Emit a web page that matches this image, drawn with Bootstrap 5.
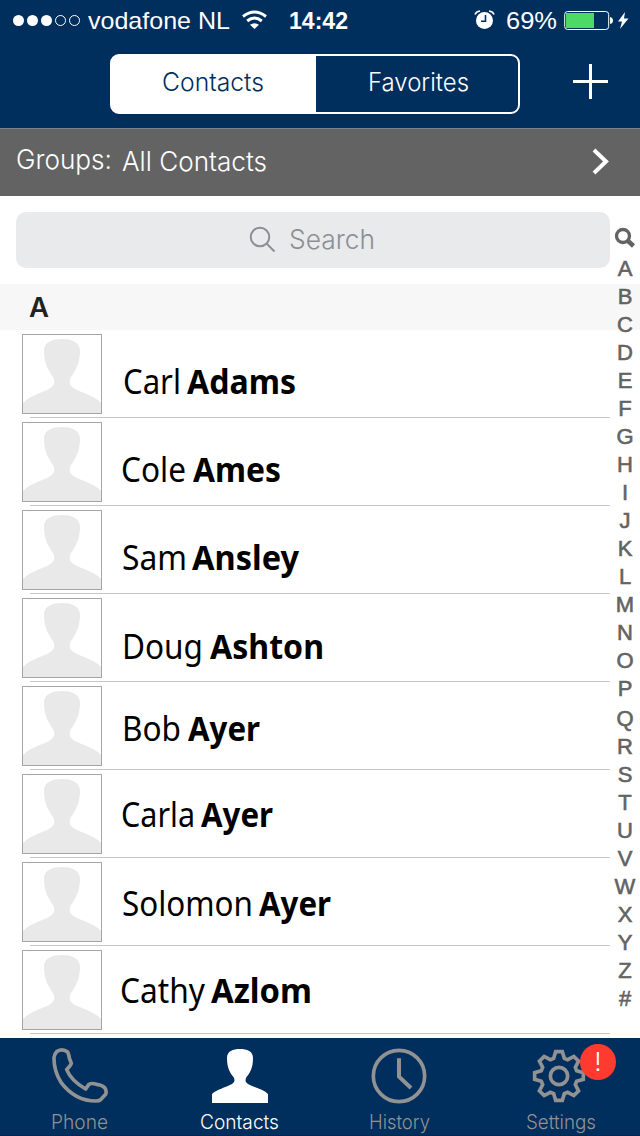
<!DOCTYPE html>
<html lang="en">
<head>
<meta charset="utf-8">
<meta name="viewport" content="width=device-width, initial-scale=1">
<title>Contacts</title>
<link href="https://cdn.jsdelivr.net/npm/bootstrap@5.3.0/dist/css/bootstrap.min.css" rel="stylesheet">
<style>
  :root { --navy:#002e5d; --muted:#929292; }
  body { width:640px; height:1136px; overflow:hidden; background:#fff; font-family:Inter,"Liberation Sans",sans-serif; font-weight:300; }
  svg { display:block; flex:none; }
  .bg-navy { background:var(--navy); }
  .fit { display:block; flex:none; white-space:nowrap; line-height:40px; height:40px; }
  .fit > span { display:inline-block; transform-origin:0 50%; }
  .status { height:40px; color:#fff; font-family:"Liberation Sans",sans-serif; font-size:24px; font-weight:400; }
  .status .fit { line-height:42px; }
  .topnav { height:88px; color:#fff; padding:14px 32px 0 110px; }
  .seg { width:410px; height:60px; border:2px solid #fff; border-radius:9px; font-size:25px; background:linear-gradient(90deg,#fff 206px,transparent 206px) border-box; }
  .seg .on { width:204px; color:var(--navy); padding:6px 0 0 50px; }
  .seg .off { padding:6px 0 0 53px; }
  .groups { height:68px; background:#636363; border-top:1px solid #7b8187; color:#fff; font-size:27px; padding-left:16px; }
  .find { margin:16px 30px 16px 16px; height:56px; border-radius:10px; background:#e9eaec; color:#8e8e93; font-size:27px; padding-left:233px; }
  .letter { height:46px; background:#f7f7f7; color:#222; font-size:27px; font-weight:600; padding:4px 0 0 29px; }
  .person { height:88px; padding-left:22px; color:#000; position:relative; font-family:"Noto Sans","Open Sans",sans-serif; font-size:34px; font-weight:400; }
  .person::after { content:""; position:absolute; left:30px; right:30px; bottom:0; height:1px; background:#c5c5c8; }
  .person b { font-weight:700; }
  .person .fit { line-height:42px; }
  .avatar { width:80px; height:80px; margin-top:4px; border:1px solid #a5a5a5; }
  .alpha { position:absolute; z-index:2; right:0; top:226px; width:30px; color:#636363; font-family:"Liberation Sans",sans-serif; font-size:22px; font-weight:400; -webkit-text-stroke:.6px #636363; text-align:center; }
  .alpha span { display:block; height:28px; line-height:29px; }
  .tabs { height:98px; margin-top:4px; color:var(--muted); font-size:20px; border-bottom:1px solid #00264f; }
  .tabs > div { width:160px; position:relative; }
  .tabs .fit { position:relative; }
  .alert-dot { position:absolute; left:100px; top:6px; width:36px; height:36px; border-radius:50%; background:#ff3b30; color:#fff; font-size:26px; line-height:36px; text-align:center; }
</style>
</head>
<body>
<svg width="0" height="0" class="position-absolute"><defs>
  <symbol id="face" viewBox="1 1 78 78"><path fill="#e9e9e9" d="M40 5C50 5 58 8 58 17C58 30 53 37 49 43C45.500 49 49 53 55 56C64 60 72 62 79 69V79H1V69C8 62 16 60 25 56C31 53 34.500 49 31 43C27 37 22 30 22 17C22 8 30 5 40 5Z"/></symbol>
</defs></svg>

<header class="bg-navy">
  <div class="status d-flex align-items-start">
    <svg width="72" height="40" style="margin-left:10px" fill="#fff"><circle cx="8.500" cy="20.500" r="5.500"/><circle cx="22.500" cy="20.500" r="5.500"/><circle cx="36.500" cy="20.500" r="5.500"/><g fill="none" stroke="#fff"><circle cx="50.500" cy="20.500" r="5"/><circle cx="64.500" cy="20.500" r="5"/></g></svg>
    <div class="fit" data-w="142" style="margin-left:6px"><span>vodafone NL</span></div>
    <svg width="26" height="40" style="margin-left:12px" fill="none" stroke="#fff" stroke-width="3"><path d="M1 16.500Q12.500 7.500 24 16.500M5.200 21Q12.500 15 19.800 21"/><path fill="#fff" stroke="none" d="M8 24.800Q12.500 21.500 17 24.800L12.500 29Z"/></svg>
    <div class="fit fw-bold" data-w="59" style="margin-left:21px"><span>14:42</span></div>
    <svg width="22" height="40" style="margin-left:126px" fill="#fff"><circle cx="10.500" cy="20.500" r="8.500"/><g fill="none" stroke="#fff" stroke-width="1.600"><path d="M1 14.500Q2 11.500 6 11M20 14.500Q19 11.500 15 11"/></g><path fill="none" stroke="#002e5d" stroke-width="1.600" d="M11.500 15V21.200H7"/></svg>
    <div class="fit" data-w="51" style="margin-left:10px"><span>69%</span></div>
    <svg width="68" height="40" style="margin-left:7px"><rect x=".7" y="11.500" width="44" height="18" rx="3" fill="none" stroke="#fff"/><rect x="2" y="13" width="28" height="15" fill="#4cd964"/><path fill="#fff" d="M46 17q3 .5 3 3.500t-3 3.500zM61 12L54 21.500H58L56 29L64.500 18.500H60Z"/></svg>
  </div>
  <div class="topnav d-flex justify-content-between">
    <div class="seg d-flex">
      <div class="on"><div class="fit" data-w="102"><span>Contacts</span></div></div>
      <div class="off"><div class="fit" data-w="101" style="margin-left:-1px"><span>Favorites</span></div></div>
    </div>
    <svg width="35" height="36" style="margin-top:10px" stroke="#fff" stroke-width="3"><path d="M0 17.500H35M17.500 0V35"/></svg>
  </div>
</header>

<div class="groups d-flex">
  <div class="fit" data-w="96" style="margin-top:11px"><span>Groups:</span></div>
  <div class="fit" data-w="145" style="margin:13px 0 0 10px"><span>All Contacts</span></div>
  <svg class="ms-auto" width="18" height="28" style="margin:19px 30px 0 0" fill="none" stroke="#fff" stroke-width="4"><path d="M2 2L14 13.500L2 25"/></svg>
</div>

<main>
  <div class="find d-flex">
    <svg width="27" height="27" style="margin-top:14px" fill="none" stroke="#8e8e93" stroke-width="2"><circle cx="11" cy="11" r="9.300"/><path d="M17.500 17.500L25.500 25.500"/></svg>
    <div class="fit" data-w="86" style="margin:8px 0 0 13px"><span>Search</span></div>
  </div>
  <div class="letter"><div class="fit" data-w="20"><span>A</span></div></div>

  <div class="person d-flex"><svg class="avatar"><use href="#face"/></svg><div class="fit" data-w="58" style="margin:30px 0 0 21px"><span>Carl</span></div><b class="fit" data-w="109" style="margin:30px 0 0 6px"><span>Adams</span></b></div>
  <div class="person d-flex"><svg class="avatar"><use href="#face"/></svg><div class="fit" data-w="65" style="margin:30px 0 0 19px"><span>Cole</span></div><b class="fit" data-w="88" style="margin:30px 0 0 7px"><span>Ames</span></b></div>
  <div class="person d-flex"><svg class="avatar"><use href="#face"/></svg><div class="fit" data-w="65" style="margin:30px 0 0 20px"><span>Sam</span></div><b class="fit" data-w="107" style="margin:30px 0 0 5px"><span>Ansley</span></b></div>
  <div class="person d-flex"><svg class="avatar"><use href="#face"/></svg><div class="fit" data-w="81" style="margin:31px 0 0 20px"><span>Doug</span></div><b class="fit" data-w="114" style="margin:31px 0 0 7px"><span>Ashton</span></b></div>
  <div class="person d-flex"><svg class="avatar"><use href="#face"/></svg><div class="fit" data-w="59" style="margin:25px 0 0 20px"><span>Bob</span></div><b class="fit" data-w="72" style="margin:25px 0 0 7px"><span>Ayer</span></b></div>
  <div class="person d-flex"><svg class="avatar"><use href="#face"/></svg><div class="fit" data-w="74" style="margin:23px 0 0 19px"><span>Carla</span></div><b class="fit" data-w="72" style="margin:23px 0 0 6px"><span>Ayer</span></b></div>
  <div class="person d-flex"><svg class="avatar"><use href="#face"/></svg><div class="fit" data-w="131" style="margin:24px 0 0 20px"><span>Solomon</span></div><b class="fit" data-w="72" style="margin:24px 0 0 6px"><span>Ayer</span></b></div>
  <div class="person d-flex"><svg class="avatar"><use href="#face"/></svg><div class="fit" data-w="85" style="margin:23px 0 0 18px"><span>Cathy</span></div><b class="fit" data-w="101" style="margin:23px 0 0 6px"><span>Azlom</span></b></div>
</main>

<nav class="alpha">
  <svg width="30" height="28" fill="none" stroke="#636363" stroke-width="3.300"><circle cx="13" cy="10" r="6.500"/><path stroke-width="4.500" d="M17.500 14.500L23.500 20"/></svg>
  <span>A</span><span>B</span><span>C</span><span>D</span><span>E</span><span>F</span><span>G</span><span>H</span><span>I</span><span>J</span><span>K</span><span>L</span><span>M</span><span>N</span><span>O</span><span>P</span><span style="margin-top:2px">Q</span><span>R</span><span>S</span><span>T</span><span>U</span><span>V</span><span>W</span><span>X</span><span>Y</span><span>Z</span><span>#</span>
</nav>

<footer class="tabs bg-navy d-flex">
  <div>
    <svg width="60" height="59" viewBox="150 48 180 177" style="margin:8px 0 0 50px" fill="none" stroke="#929292" stroke-width="11" stroke-linejoin="round"><path d="M162 82Q163 72 171 64Q188 54 203 66Q207 75 208 84L214 100Q212 107 200 119Q214 153 257 177L266 164Q272 158 290 163Q304 164 314 173Q321 183 317 193L303 208Q298 213 288 213Q225 213 183 157Q161 122 162 82Z"/></svg>
    <div class="fit" data-w="57" style="margin:-3px 0 0 51px"><span>Phone</span></div>
  </div>
  <div class="text-white">
    <svg width="56" height="56" style="margin:11px 0 0 52px" fill="#fff"><path d="M28 0C35 0 41 2 41 9C41 19 38 24 34.500 28C33 31 33 33 36 35C43 39 51 40 56 45V54H0V45C5 40 13 39 20 35C23 33 23 31 21.500 28C18 24 15 19 15 9C15 2 21 0 28 0Z"/></svg>
    <div class="fit" data-w="79" style="margin:-3px 0 0 40px"><span>Contacts</span></div>
  </div>
  <div>
    <svg width="60" height="59" viewBox="148 48 180 177" style="margin:8px 0 0 49.300px" fill="none" stroke="#929292" stroke-width="11"><circle cx="238" cy="138" r="77"/><path stroke-width="12" d="M238 85V140L274 174"/></svg>
    <div class="fit" data-w="61" style="margin:-3px 0 0 49px"><span>History</span></div>
  </div>
  <div>
    <svg width="60" height="59" viewBox="-90 -90 180 177" style="margin:8px 0 0 49.300px" fill="none" stroke="#929292" stroke-width="11"><path d="M-16-53L-10-73H10L16-53L26-49L44.500-58.700L58.700-44.500L49-26L53-16L73-10V10L53 16L49 26L58.700 44.500L44.500 58.700L26 49L16 53L10 73H-10L-16 53L-26 49L-44.500 58.700L-58.700 44.500L-49 26L-53 16L-73 10V-10L-53-16L-49-26L-58.700-44.500L-44.500-58.700L-26-49Z"/><circle r="26"/></svg>
    <div class="alert-dot">!</div>
    <div class="fit" data-w="70" style="margin:-3px 0 0 46px"><span>Settings</span></div>
  </div>
</footer>

<script src="https://cdn.jsdelivr.net/npm/bootstrap@5.3.0/dist/js/bootstrap.bundle.min.js"></script>
<script>
  // Condense each label to the width reserved for it.
  document.querySelectorAll('.fit').forEach(function (box) {
    var w = +box.dataset.w, t = box.firstElementChild;
    box.style.width = w + 'px';
    t.style.transform = 'scaleX(' + w / t.getBoundingClientRect().width + ')';
  });
</script>
</body>
</html>
